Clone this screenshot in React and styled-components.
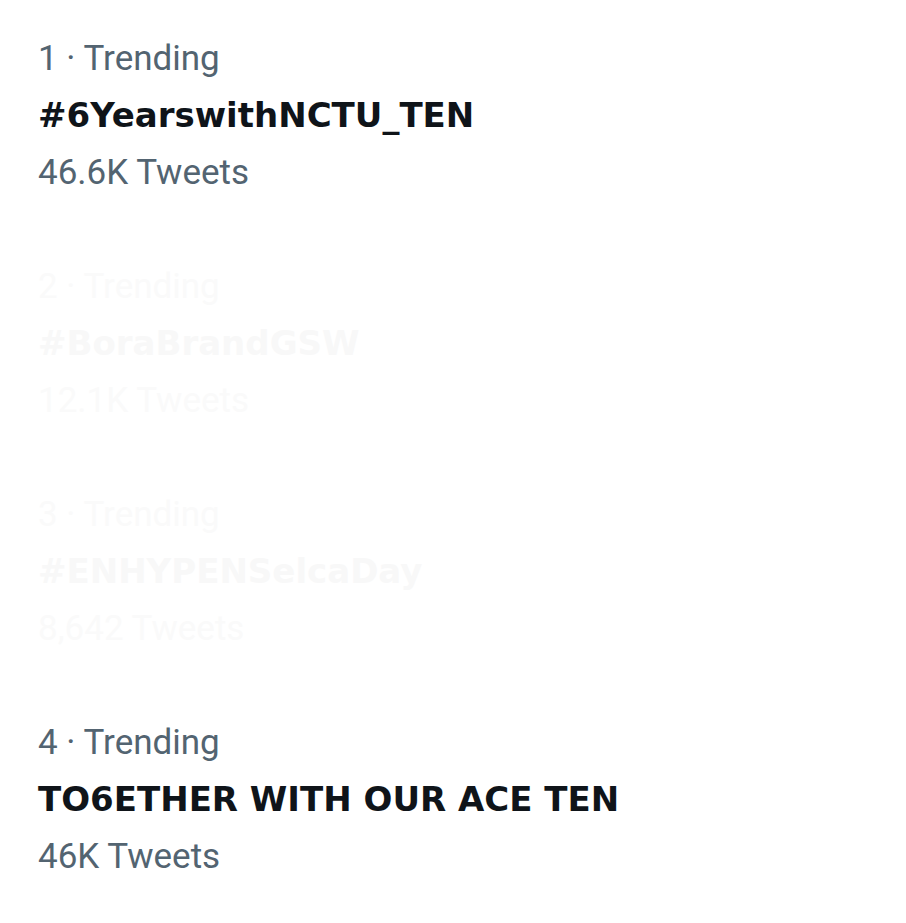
import styled, { createGlobalStyle } from "styled-components";

const GlobalStyle = createGlobalStyle`
  html, body {
    margin: 0;
    padding: 0;
    background: #ffffff;
  }
  body {
    font-family: Roboto, "Liberation Sans", sans-serif;
    -webkit-font-smoothing: antialiased;
  }
`;

const trends = [
  { rank: 1, name: "#6YearswithNCTU_TEN", count: "46.6K Tweets" },
  { rank: 2, name: "#BoraBrandGSW", count: "12.1K Tweets", faded: true },
  { rank: 3, name: "#ENHYPENSelcaDay", count: "8,642 Tweets", faded: true },
  { rank: 4, name: "TO6ETHER WITH OUR ACE TEN", count: "46K Tweets" },
];

export default function App() {
  return (
    <>
      <GlobalStyle />
      <List>
        {trends.map((t) => (
          <Trend key={t.rank} $faded={t.faded}>
            <Meta>{t.rank} · Trending</Meta>
            <Name>{t.name}</Name>
            <Meta>{t.count}</Meta>
          </Trend>
        ))}
      </List>
    </>
  );
}

const List = styled.div`
  width: 906px;
  height: 923px;
  padding: 30px 38px 0;
  box-sizing: border-box;
  display: flex;
  flex-direction: column;
  gap: 57px;
  overflow: hidden;
`;

const Trend = styled.div`
  display: flex;
  flex-direction: column;
  color: ${(p) => (p.$faded ? "#fafafa" : "#536471")};

  & > h2 {
    color: ${(p) => (p.$faded ? "#f8f8f8" : "#0f1419")};
  }
`;

const Meta = styled.div`
  font-size: 35px;
  line-height: 57px;
  font-weight: 400;
`;

const Name = styled.h2`
  margin: 0;
  font-family: "DejaVu Sans", Roboto, sans-serif;
  font-size: 34px;
  line-height: 57px;
  font-weight: 700;
`;
